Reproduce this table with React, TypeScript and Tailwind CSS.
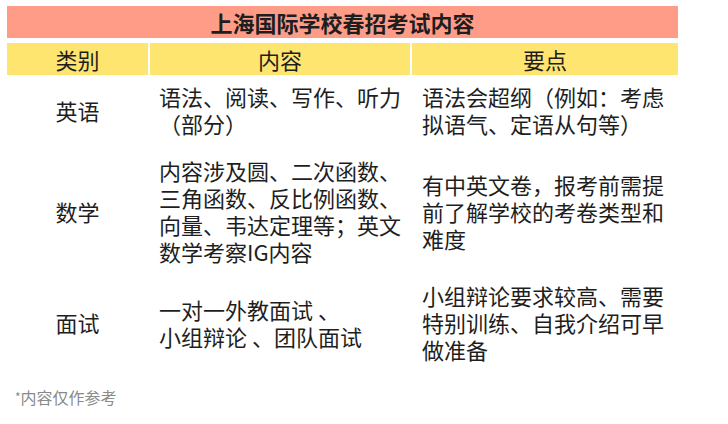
import React from "react";

const font = { fontFamily: '"Noto Sans CJK SC", "Noto Sans", sans-serif' };

type Row = { cat: string; content: string[]; points: string[]; pt: string };

const rows: Row[] = [
  {
    cat: "英语",
    content: ["语法、阅读、写作、听力", "（部分）"],
    points: ["语法会超纲（例如：考虑", "拟语气、定语从句等）"],
    pt: "pt-[8px] pb-[10px]",
  },
  {
    cat: "数学",
    content: ["内容涉及圆、二次函数、", "三角函数、反比例函数、", "向量、韦达定理等；英文", "数学考察IG内容"],
    points: ["有中英文卷，报考前需提", "前了解学校的考卷类型和", "难度"],
    pt: "pt-[10px] pb-[8px]",
  },
  {
    cat: "面试",
    content: ["一对一外教面试 、", "小组辩论 、团队面试"],
    points: ["小组辩论要求较高、需要", "特别训练、自我介绍可早", "做准备"],
    pt: "pt-[9px] pb-[9px]",
  },
];

function Lines({ lines }: { lines: string[] }) {
  return (
    <div className="whitespace-pre">
      {lines.map((l, i) => (
        <React.Fragment key={i}>
          {i > 0 && <br />}
          {l}
        </React.Fragment>
      ))}
    </div>
  );
}

export default function App() {
  return (
    <div className="w-[728px] h-[424px] bg-white text-[#1e1e1e] overflow-hidden" style={font}>
      <div className="pt-[6px] pl-[7px]">
        <div className="w-[671px] h-[32px] bg-[#fe9c88] flex items-center justify-center text-[22px] font-bold leading-none">
          上海国际学校春招考试内容
        </div>
        <div className="mt-[5px] w-[671px] grid grid-cols-[141px_260px_266px] gap-x-[2px]">
          <div className="h-[32px] bg-[#fee56f] flex items-center justify-center text-[22px] leading-none">类别</div>
          <div className="h-[32px] bg-[#fee56f] flex items-center justify-center text-[22px] leading-none">内容</div>
          <div className="h-[32px] bg-[#fee56f] flex items-center justify-center text-[22px] leading-none">要点</div>
          {rows.map((r) => (
            <React.Fragment key={r.cat}>
              <div className={`${r.pt} flex items-center justify-center text-[22px] leading-[27px]`}>{r.cat}</div>
              <div className={`${r.pt} pl-[9px] flex flex-col justify-center text-[22px] leading-[27px]`}>
                <Lines lines={r.content} />
              </div>
              <div className={`${r.pt} pl-[10px] flex flex-col justify-center text-[22px] leading-[27px]`}>
                <Lines lines={r.points} />
              </div>
            </React.Fragment>
          ))}
        </div>
        <div className="mt-[15px] pl-[8px] text-[16px] leading-[20px] text-[#8a8a8a]">
          <span className="text-[12px] align-[2px]">*</span>内容仅作参考
        </div>
      </div>
    </div>
  );
}
